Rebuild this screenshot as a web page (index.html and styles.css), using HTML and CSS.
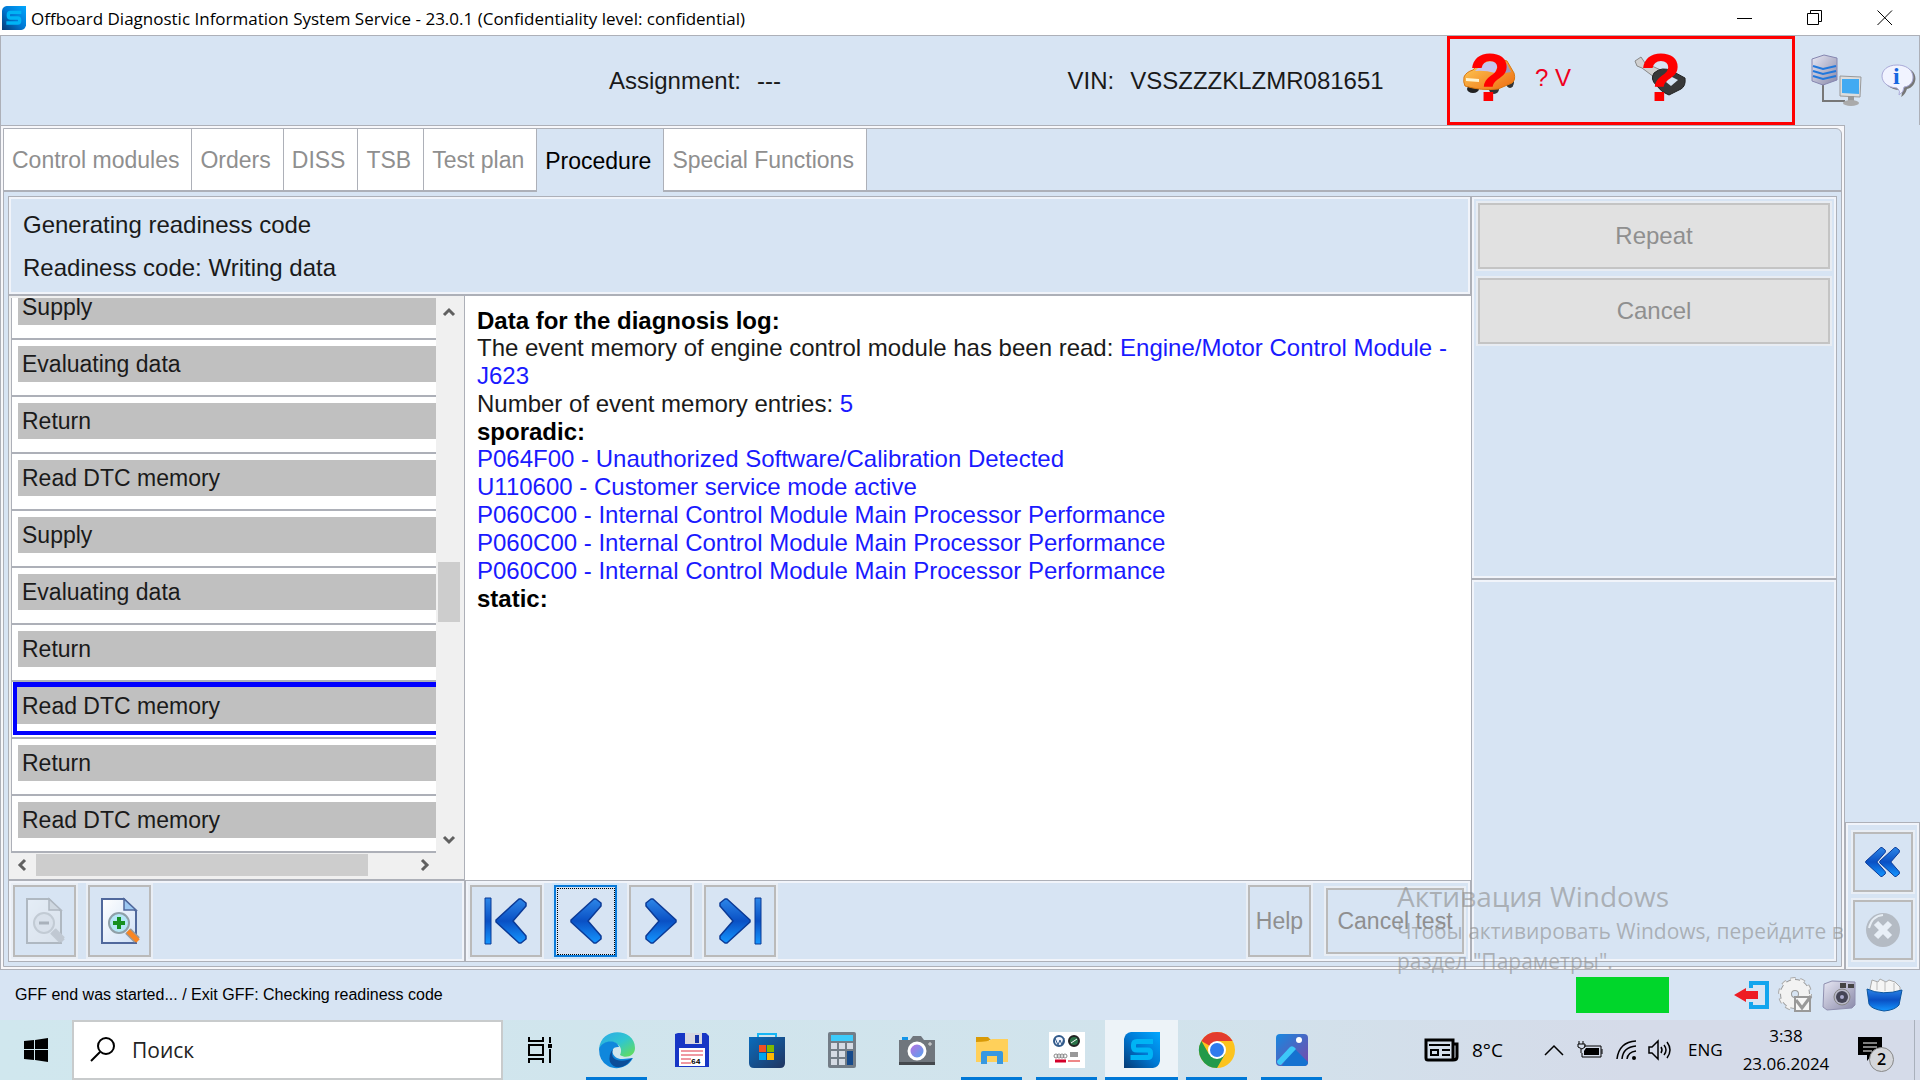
FILE: index.html
```html
<!DOCTYPE html>
<html lang="en">
<head>
<meta charset="utf-8">
<meta name="viewport" content="width=device-width, initial-scale=1">
<title>Offboard Diagnostic Information System Service</title>
<link rel="stylesheet" href="styles.css">
</head>
<body>
<svg class="defs" aria-hidden="true">
  <defs>
    <linearGradient id="blue" x1="0" y1="0" x2="0" y2="1"><stop offset="0" stop-color="#2c86e8"/><stop offset=".5" stop-color="#0a50c4"/><stop offset="1" stop-color="#1496ff"/></linearGradient>
    <linearGradient id="brand" x1="0" y1="1" x2="1" y2="0"><stop offset="0" stop-color="#063a74"/><stop offset=".5" stop-color="#0078d4"/><stop offset="1" stop-color="#00a8ff"/></linearGradient>
    <linearGradient id="orange" x1="0" y1="0" x2="1" y2="1"><stop offset="0" stop-color="#ffd45c"/><stop offset="1" stop-color="#ee6a10"/></linearGradient>
    <linearGradient id="paper" x1="0" y1="0" x2="1" y2="1"><stop offset="0" stop-color="#fff"/><stop offset="1" stop-color="#cfe0f6"/></linearGradient>
    <linearGradient id="edgeTop" x1="0" y1="0" x2="1" y2="1"><stop offset="0" stop-color="#2ba8ea"/><stop offset=".5" stop-color="#30c6cf"/><stop offset="1" stop-color="#6be04b"/></linearGradient>
    <linearGradient id="store" x1="0" y1="0" x2="1" y2="1"><stop offset="0" stop-color="#0a6cbd"/><stop offset="1" stop-color="#213560"/></linearGradient>
    <linearGradient id="lens" x1="0" y1="0" x2="1" y2="1"><stop offset="0" stop-color="#c36be0"/><stop offset="1" stop-color="#4aa8f0"/></linearGradient>
    <linearGradient id="photo" x1="0" y1="0" x2="1" y2="1"><stop offset="0" stop-color="#1788e0"/><stop offset="1" stop-color="#7b48a8"/></linearGradient>
    <linearGradient id="metal" x1="0" y1="0" x2="1" y2="1"><stop offset="0" stop-color="#e8e8f4"/><stop offset="1" stop-color="#8888a8"/></linearGradient>
    <symbol id="logo" viewBox="0 0 36 36">
      <path d="M7 0H36V29Q35 35 29 36H0V7Q1 1 7 0Z" fill="url(#brand)"/>
      <path d="M29 9.500H13Q9.500 9.500 9.500 13V15Q9.500 18 13 18H23.500Q26.500 18 26.500 21V22.500Q26.500 25.500 23.500 25.500H6.500" fill="none" stroke="#00b4f5" stroke-width="5"/>
    </symbol>
    <symbol id="chev" viewBox="0 0 32 48"><path d="M24 2H26L31 6V9L18 24L31 39V42L26 46H24L1 25V23Z" fill="url(#blue)" stroke="#0b3a96" stroke-width="1.500" stroke-linejoin="round"/></symbol>
    <symbol id="page" viewBox="0 0 40 48">
      <path d="M2 2H24L36 14V46H2Z" fill="url(#paper)" stroke="#50689c" stroke-width="2"/>
      <path d="M24 2V13H36Z" fill="#9cc8f2" stroke="#50689c" stroke-width="1.500"/>
      <path d="M28 34L37 43" stroke="#999" stroke-width="8"/>
      <path d="M28 34L38 44" stroke="#f98522" stroke-width="5"/>
      <circle cx="19" cy="26" r="10" fill="#b4e6f6" stroke="#8fa0a8" stroke-width="2"/>
    </symbol>
  </defs>
</svg>

<div class="app">
  <header class="titlebar">
    <svg class="titlebar-logo"><use href="#logo"/></svg>
    <h1 class="titlebar-text">Offboard Diagnostic Information System Service - 23.0.1 (Confidentiality level: confidential)</h1>
    <div class="window-controls">
      <button aria-label="Minimize"><svg width="16" height="16"><path d="M0 8.500H15" stroke="#000"/></svg></button>
      <button aria-label="Restore"><svg width="16" height="16" fill="none" stroke="#000"><path d="M.5 3.500H11.500V14.500H.5ZM3.500 3.500V.5H14.500V11.500H11.500"/></svg></button>
      <button aria-label="Close"><svg width="16" height="16"><path d="M.5 .5L15 15M15 .5L.5 15" stroke="#000"/></svg></button>
    </div>
  </header>

  <section class="session">
    <p class="session-field session-assignment"><span>Assignment:</span><span>---</span></p>
    <p class="session-field"><span>VIN:</span><span>VSSZZZKLZMR081651</span></p>
    <div class="signals">
      <svg width="56" height="60" viewBox="0 0 56 60" role="img" aria-label="Vehicle unknown">
        <ellipse cx="12" cy="41" rx="6" ry="4" fill="#222"/><ellipse cx="33" cy="41" rx="5" ry="5" fill="#333"/><ellipse cx="49" cy="34" rx="4" ry="6" fill="#333"/>
        <path d="M3 29Q5 24 12 22L20 13Q34 8 46 13L53 25Q55 32 51 35L37 41Q20 43 4 38Q2 34 3 29Z" fill="url(#orange)" stroke="#d9770f"/>
        <path d="M14 23L22 15Q30 12 38 14L34 25Q24 22 14 23Z" fill="#c5c5ee"/><path d="M40 15L46 16L50 24L38 26Z" fill="#9a9ac0"/>
        <path d="M5 30L18 31V34L5 33Z" fill="#fff3cf"/>
        <text x="8" y="53" class="alert-mark">?</text>
      </svg>
      <span class="volts">? V</span>
      <svg class="key-icon" width="56" height="60" viewBox="0 0 56 60" role="img" aria-label="Ignition unknown">
        <path d="M3 13L9 9L13 15L31 23L26 32L10 20L5 18Z" fill="#d0d0d0" stroke="#888"/>
        <path d="M22 25Q30 18 40 23L53 30Q54 38 49 41L37 47Q30 45 24 37Q18 31 22 25Z" fill="#383838" stroke="#222"/>
        <path d="M38 28L46 32L39 38L34 34Z" fill="#d7e4f2"/>
        <text x="8" y="53" class="alert-mark">?</text>
      </svg>
    </div>
    <div class="session-icons">
      <svg width="54" height="54" viewBox="0 0 54 54" role="img" aria-label="Network">
        <path d="M14 26V47H36" fill="none" stroke="#777" stroke-width="2"/>
        <path d="M3 5L15 1L28 4V26L14 31L3 27Z" fill="url(#metal)" stroke="#8686b0"/>
        <path d="M4 12L14 15L27 12M4 17L14 20L27 17M4 22L14 25L27 22" fill="none" stroke="#2278dc" stroke-width="2"/>
        <path d="M31 22L52 23L51 43L31 42Z" fill="#ddd" stroke="#999"/><path d="M33 25L50 25V40L33 39Z" fill="#42aaf2"/>
        <path d="M39 42H45V47H39Z" fill="#999"/><ellipse cx="42" cy="49" rx="8" ry="3" fill="#aaa"/>
      </svg>
      <svg width="36" height="36" viewBox="0 0 36 36" role="img" aria-label="Information">
        <path d="M18 4C40 4 37 24 26 26Q24 32 20 34Q22 30 19 27C-2 26-2 4 18 4Z" fill="#777"/>
        <path d="M16 2C36 2 36 23 23 24Q23 29 18 32Q20 28 16 25C-4 24-4 2 16 2Z" fill="#f1f3ff" stroke="#aaaad8"/>
        <text x="12" y="21" class="info-mark">i</text>
      </svg>
    </div>
  </section>

  <div class="workspace">
    <main class="frame"><div class="frame-inner">
      <nav class="tabs" role="tablist">
        <button role="tab" class="tab">Control modules</button>
        <button role="tab" class="tab">Orders</button>
        <button role="tab" class="tab">DISS</button>
        <button role="tab" class="tab">TSB</button>
        <button role="tab" class="tab">Test plan</button>
        <button role="tab" class="tab tab-active" aria-selected="true">Procedure</button>
        <button role="tab" class="tab">Special Functions</button>
        <span class="tabs-rest"></span>
      </nav>
      <div class="content">
        <div class="procedure">
          <section class="panel heading"><p>Generating readiness code</p><p>Readiness code: Writing data</p></section>
          <div class="split">
            <div class="steps">
              <div class="steps-view">
                <ol class="step-list">
                  <li class="step"><span>Supply</span></li>
                  <li class="step"><span>Evaluating data</span></li>
                  <li class="step"><span>Return</span></li>
                  <li class="step"><span>Read DTC memory</span></li>
                  <li class="step"><span>Supply</span></li>
                  <li class="step"><span>Evaluating data</span></li>
                  <li class="step"><span>Return</span></li>
                  <li class="step step-current"><span>Read DTC memory</span></li>
                  <li class="step"><span>Return</span></li>
                  <li class="step"><span>Read DTC memory</span></li>
                </ol>
                <div class="vscroll">
                  <svg width="12" height="10"><path d="M1 8L6 3L11 8" class="arrow"/></svg>
                  <div class="vtrack"><div class="vthumb"></div></div>
                  <svg width="12" height="10"><path d="M1 2L6 7L11 2" class="arrow"/></svg>
                </div>
              </div>
              <div class="hscroll">
                <svg width="10" height="12"><path d="M8 1L3 6L8 11" class="arrow"/></svg>
                <div class="htrack"><div class="hthumb"></div></div>
                <svg width="10" height="12"><path d="M2 1L7 6L2 11" class="arrow"/></svg>
              </div>
            </div>
            <article class="log">
              <h2>Data for the diagnosis log:</h2>
              <p>The event memory of engine control module has been read: <em>Engine/Motor Control Module - J623</em></p>
              <p>Number of event memory entries: <em>5</em></p>
              <h2>sporadic:</h2>
              <p><em>P064F00 - Unauthorized Software/Calibration Detected</em></p>
              <p><em>U110600 - Customer service mode active</em></p>
              <p><em>P060C00 - Internal Control Module Main Processor Performance</em></p>
              <p><em>P060C00 - Internal Control Module Main Processor Performance</em></p>
              <p><em>P060C00 - Internal Control Module Main Processor Performance</em></p>
              <h2>static:</h2>
            </article>
            <div class="panel toolbar">
              <button class="tool" disabled aria-label="Zoom out"><svg class="faded" width="40" height="48"><use href="#page"/><path d="M14 26H24" stroke="#555" stroke-width="3"/></svg></button>
              <button class="tool" aria-label="Zoom in"><svg width="40" height="48"><use href="#page"/><path d="M13 26H25M19 20V32" stroke="#159020" stroke-width="4"/></svg></button>
            </div>
            <div class="panel toolbar">
              <button class="tool tool-wide" aria-label="First"><svg width="44" height="48"><path d="M1 1H7V47H1Z" fill="url(#blue)" stroke="#0b3a96"/><use href="#chev" x="11" width="32" height="48"/></svg></button>
              <button class="tool tool-focus" aria-label="Previous"><svg width="32" height="48"><use href="#chev"/></svg></button>
              <button class="tool" aria-label="Next"><svg class="flip" width="32" height="48"><use href="#chev"/></svg></button>
              <button class="tool tool-wide" aria-label="Last"><svg class="flip" width="44" height="48"><path d="M1 1H7V47H1Z" fill="url(#blue)" stroke="#0b3a96"/><use href="#chev" x="11" width="32" height="48"/></svg></button>
              <button class="tool tool-help" disabled>Help</button>
              <button class="tool tool-cancel" disabled>Cancel test</button>
            </div>
          </div>
        </div>
        <aside class="actions">
          <div class="panel action-buttons">
            <button class="action" disabled>Repeat</button>
            <button class="action" disabled>Cancel</button>
          </div>
          <div class="panel"></div>
        </aside>
      </div>
    </div></main>
    <aside class="dock">
      <div class="panel dock-panel">
        <button class="dock-button" aria-label="Collapse"><svg width="36" height="34"><use href="#chev" x="0" y="1" width="21" height="32"/><use href="#chev" x="14" y="1" width="21" height="32"/></svg></button>
        <button class="dock-button" disabled aria-label="Close"><svg width="36" height="36"><circle cx="18" cy="18" r="17" fill="#b4bbc4"/><path d="M4 16Q7 4 18 3" fill="none" stroke="#e6edf4" stroke-width="2"/><path d="M11 11L25 25M25 11L11 25" stroke="#e8eff7" stroke-width="6"/></svg></button>
      </div>
    </aside>
  </div>

  <footer class="status">
    <p>GFF end was started... / Exit GFF: Checking readiness code</p>
    <div class="progress"></div>
    <div class="status-icons">
      <svg width="36" height="36"><path d="M17 11V6H33V30H17V25" fill="none" stroke="#12a5ee" stroke-width="4"/><path d="M0 18L12 11V14H24V22H12V25Z" fill="#ee1c24"/></svg>
      <svg width="36" height="36"><circle cx="17" cy="17" r="15" fill="none" stroke="#aaa" stroke-width="4" stroke-dasharray="5 4.400"/><circle cx="17" cy="17" r="9" fill="none" stroke="#999" stroke-width="12"/><circle cx="17" cy="17" r="9" fill="none" stroke="#f2f2f2" stroke-width="10"/><circle cx="17" cy="17" r="14" fill="none" stroke="#f2f2f2" stroke-width="4" stroke-dasharray="4 4.800"/><path d="M17 20H32V34H17Z" fill="#f6f6f6" stroke="#999" stroke-width="2"/><path d="M18 23L24 31L33 19" fill="none" stroke="#999" stroke-width="3"/></svg>
      <svg width="36" height="36"><path d="M2 7L10 4L33 5V28L30 31L5 33L1 30Z" fill="url(#metal)" stroke="#9090b0"/><path d="M18 6H24V11H18ZM26 7H32V11H26Z" fill="#444"/><circle cx="20" cy="20" r="8" fill="#b8b8c8" stroke="#888"/><circle cx="20" cy="20" r="6" fill="#445"/><circle cx="20" cy="20" r="2" fill="#aac"/></svg>
      <svg width="38" height="38"><path d="M4 13L6 4L12 6L14 3L20 6L23 4L29 6L34 11V18H4Z" fill="#f5f5f5" stroke="#aaa"/><path d="M11 6V14M19 6V15M28 7V15" stroke="#bbb"/><path d="M1 13Q16 20 36 14L33 29Q29 34 18 35Q5 33 3 28Z" fill="url(#blue)" stroke="#0b559e"/></svg>
    </div>
  </footer>

  <nav class="taskbar">
    <button class="start" aria-label="Start"><svg width="26" height="26"><path d="M1 4L11 3V12H1ZM12 3L25 1V12H12ZM1 13H11V23L1 22ZM12 13H25V25L12 23Z"/></svg></button>
    <label class="search"><svg width="26" height="26" fill="none" stroke="#000" stroke-width="2"><circle cx="16" cy="9" r="8"/><path d="M10 15L1 24"/></svg><input type="text" placeholder="Поиск" aria-label="Поиск"></label>
    <button class="taskview" aria-label="Task view"><svg width="26" height="26" fill="none" stroke="#000" stroke-width="2"><path d="M2 0V4H16V0M2 8H16V18H2ZM2 26V22H16V26M23 0V6M23 12V26"/><path d="M23 7V11" stroke-width="4"/></svg></button>
    <div class="apps">
      <button class="app-button running" aria-label="Edge"><svg width="36" height="36"><path d="M0 17C2-6 36-4 36 16C36 24 27 27 21 23Q25 14 14 10Q5 9 0 17Z" fill="url(#edgeTop)"/><path d="M0 17C3 8 18 7 20 15C9 14 13 28 24 27L34 26C28 37 16 38 9 34Q0 29 0 17Z" fill="#0f87dc"/><path d="M14 17C9 30 25 31 33 26C27 37 15 38 11 30Q9 23 14 17Z" fill="#0c4d99"/></svg></button>
      <button class="app-button" aria-label="Commander"><svg width="34" height="34"><path d="M0 1L3 0H31L34 3V34H0Z" fill="#1736c5"/><path d="M10 0H27V11H10Z" fill="#d8d8e0"/><path d="M20 2H24V10H20Z" fill="#1530a5"/><path d="M4 15H30V33H4Z" fill="#fff"/><path d="M6 18H28M6 22H28M6 26H28M6 30H28" stroke="#df3344"/><path d="M16 24H28V32H16Z" fill="#fff"/><text x="16" y="31" class="disk-label">64</text></svg></button>
      <button class="app-button" aria-label="Store"><svg width="36" height="36"><path d="M9 8V2H27V8" fill="none" stroke="#16b6f5" stroke-width="2"/><path d="M0 5H36V31Q36 36 31 36H5Q0 36 0 31Z" fill="url(#store)"/><path d="M10 13H17V20H10Z" fill="#f25022"/><path d="M18 13H25V20H18Z" fill="#7fba00"/><path d="M10 21H17V28H10Z" fill="#00a4ef"/><path d="M18 21H25V28H18Z" fill="#ffb900"/></svg></button>
      <button class="app-button" aria-label="Calculator"><svg width="28" height="36"><rect width="28" height="36" rx="2" fill="#737d87"/><path d="M3 3H25V9H3Z" fill="#3dcbfa"/><path d="M3 11H9V17H3ZM11 11H17V17H11ZM19 11H25V17H19ZM3 19H9V25H3ZM11 19H17V25H11ZM3 27H9V33H3ZM11 27H17V33H11Z" fill="#d5dbe4"/><path d="M19 19H25V33H19Z" fill="#164a8b"/></svg></button>
      <button class="app-button" aria-label="Camera"><svg width="36" height="30"><path d="M3 2H9V6H3Z" fill="#1495e8"/><path d="M0 5H11L14 1H22L25 5H36V30H0Z" fill="#70767d"/><path d="M0 27H36V30H0Z" fill="#44484d"/><circle cx="18" cy="16" r="8" fill="url(#lens)" stroke="#fff" stroke-width="3"/><path d="M31 7V11M29 9H33" stroke="#ddd"/></svg></button>
      <button class="app-button running" aria-label="Explorer"><svg width="34" height="28"><path d="M1 1H13L16 4H14V8H1Z" fill="#d99a06"/><path d="M1 6Q14 6 17 3H33V26H1Z" fill="#ffd05a"/><path d="M6 28V17Q6 15 8 15H26Q28 15 28 17V28H22V20H12V28Z" fill="#3898e0"/></svg></button>
      <button class="app-button running" aria-label="Brands"><svg width="36" height="36"><path d="M0 0H36V36H0Z" fill="#fff"/><circle cx="10" cy="9" r="5" fill="#f2f6ff" stroke="#315a8a" stroke-width="2"/><path d="M6 6L9 13L11 8L13 13L15 6" fill="none" stroke="#315a8a"/><circle cx="25" cy="9" r="5" fill="#2b7348" stroke="#222" stroke-width="2"/><path d="M22 11L28 7" stroke="#fff"/><g fill="none" stroke="#888"><circle cx="7" cy="24" r="2"/><circle cx="10" cy="24" r="2"/><circle cx="13" cy="24" r="2"/><circle cx="16" cy="24" r="2"/></g><path d="M21 20H29V25H21Z" fill="#999"/><path d="M6 29H17" stroke="#d4002a" stroke-width="3"/><path d="M19 29H31" stroke="#e88" stroke-width="2"/></svg></button>
      <button class="app-button running selected" aria-label="Diagnostic service"><svg width="36" height="36"><use href="#logo"/></svg></button>
      <button class="app-button running" aria-label="Chrome"><svg width="36" height="36"><circle cx="18" cy="18" r="18" fill="#fcc31e"/><path d="M2.400 9A18 18 0 0 1 33.600 9H18V18Z" fill="#e33b2e"/><path d="M2.400 9A18 18 0 0 0 18 36L25.800 22.500L18 18L10.200 22.500Z" fill="#229a4a"/><circle cx="18" cy="18" r="9" fill="#fff"/><circle cx="18" cy="18" r="7" fill="#2f7bed"/></svg></button>
      <button class="app-button running" aria-label="Photos"><svg width="32" height="32"><rect width="32" height="32" rx="4" fill="url(#photo)"/><path d="M16 15Q18 13 20 16L32 28Q32 32 28 32H6Z" fill="#1572d0"/><path d="M1 27L14 13Q17 11 20 15L5 31Q1 31 1 27Z" fill="#3dc7f8"/><circle cx="23" cy="6" r="3" fill="#fff"/></svg></button>
    </div>
    <div class="tray">
      <svg width="34" height="24" fill="none" stroke="#000" stroke-width="3"><path d="M2 2H29V22H4Q2 22 2 20ZM29 6H33V19Q33 22 29 22"/><path d="M5 7H26M18 12H26M18 17H26M7 12H14V17H7Z" stroke-width="2"/></svg>
      <span class="weather">8°C</span>
      <svg class="tray-chevron" width="20" height="12"><path d="M1 11L10 2L19 11" fill="none" stroke="#000" stroke-width="1.500"/></svg>
      <svg width="24" height="18"><path d="M6 5H23V16H4V12M24 8V13" fill="none" stroke="#000"/><path d="M8 7H21V14H6V10Z"/><path d="M1 0V3M5 0V3M0 3H7V6L4 8L0 6ZM3 8V12" fill="none" stroke="#000"/></svg>
      <svg class="wifi" width="22" height="22" fill="none" stroke="#000" stroke-width="1.500"><path d="M1 20Q3 3 20 2M6 20Q7 8 20 7M11 20Q12 13 20 12"/><circle cx="18" cy="19" r="2" fill="#000" stroke="none"/></svg>
      <svg width="24" height="20" fill="none" stroke="#000" stroke-width="1.500"><path d="M1 7H4L10 1V19L4 13H1ZM13 7Q15 10 13 13M16 5Q20 10 16 15M19 2Q25 10 19 18"/></svg>
      <span class="lang">ENG</span>
      <time class="clock">3:38<br>23.06.2024</time>
      <button class="notifications" aria-label="Notifications"><svg width="24" height="26"><path d="M0 0H24V18H14L9 24V18H0Z"/><path d="M5 6H19M5 10H19M5 14H14" stroke="#fff"/></svg><span class="badge">2</span></button>
    </div>
  </nav>

  <div class="watermark">
    <p class="watermark-title">Активация Windows</p>
    <p>Чтобы активировать Windows, перейдите в<br>раздел "Параметры".</p>
  </div>
</div>
</body>
</html>
```
FILE: styles.css
```css
:root {
  --face: #d7e4f3;
  --line: #adb0b8;
  --shine: #f1f4fa;
  --dim: #8f8f8f;
  --ui: "Open Sans", "Noto Sans", sans-serif;
}

* { box-sizing: border-box; }

body {
  margin: 0;
  background: var(--face);
  color: #1a1a1a;
  font: 24px/28px "Liberation Sans", Arial, sans-serif;
}

p, h1, h2, ol { margin: 0; padding: 0; }
svg { display: block; flex: none; overflow: visible; }
.defs { position: absolute; width: 0; height: 0; }
button { padding: 0; border: 0; background: none; color: inherit; font: inherit; }

.app {
  position: relative;
  display: flex;
  flex-direction: column;
  min-height: 100vh;
}

/* Window title */
.titlebar {
  display: flex;
  align-items: center;
  gap: 5px;
  height: 35px;
  padding-left: 2px;
  background: #fff;
}
.titlebar-logo { width: 24px; height: 24px; }
.titlebar-text { flex: 1; color: #000; font: 17px/24px var(--ui); padding-top: 2px; }
.window-controls { display: flex; }
.window-controls button { display: grid; place-items: center; width: 70px; height: 33px; }

/* Session header */
.session {
  display: grid;
  grid-template-columns: 1068fr 380fr 348px 124px;
  align-items: center;
  height: 90px;
  border: 1px solid var(--line);
  border-bottom: 0;
}
.session-field { display: flex; gap: 16px; }
.session-assignment { padding-left: 57%; }
.signals {
  display: flex;
  align-items: center;
  align-self: stretch;
  padding: 0 0 6px 11px;
  border: 3px solid #f00;
}
.volts { width: 84px; padding-left: 18px; color: #f00020; }
.key-icon { margin-left: 31px; }
.alert-mark { fill: #f00; font: bold 68px "Liberation Sans", Arial, sans-serif; }
.session-icons { display: flex; align-items: center; gap: 18px; padding-left: 14px; }
.info-mark { fill: #1667e0; font: bold 24px "Liberation Serif", serif; }

/* Framed work area */
.workspace { display: flex; flex: 1; }
.frame {
  display: flex;
  flex: 1;
  padding: 2px;
  border: 1px solid var(--line);
  background: #f7f7fa;
}
.frame-inner {
  display: flex;
  flex: 1;
  flex-direction: column;
  border: 1px solid var(--line);
  border-radius: 0 6px 0 0;
  background: var(--face);
}

.tabs { display: flex; height: 63px; font-size: 23px; }
.tab {
  padding: 0 12px 0 8px;
  border-right: 1px solid var(--line);
  border-bottom: 2px solid var(--line);
  background: #fff;
  color: var(--dim);
}
.tab-active { border-bottom: 0; background: var(--face); color: #000; }
.tabs-rest { flex: 1; border-bottom: 2px solid var(--line); }

.content { display: flex; flex: 1; padding: 4px; }
.procedure { display: flex; flex: 1; flex-direction: column; }
.panel { border: 1px solid var(--line); box-shadow: inset 0 0 0 2px var(--shine); }
.heading { height: 99px; padding: 6px 14px; line-height: 43px; }

.split {
  display: grid;
  flex: 1;
  grid-template-columns: 457px 1fr;
  grid-template-rows: 1fr 82px;
}

/* Steps list, scrolled to its last rows */
.steps {
  display: flex;
  flex-direction: column;
  padding: 2px;
  border: 1px solid var(--line);
  background: #f0f0f0;
}
.steps-view { display: flex; flex: 1; }
.step-list {
  display: flex;
  flex: 1;
  flex-direction: column;
  justify-content: flex-end;
  height: calc(100vh - 525px);
  overflow: hidden;
  border-left: 1px solid var(--line);
  background: #fff;
  font-size: 23px;
  list-style: none;
}
.step { flex: none; height: 57px; padding: 6px 0 0 6px; border-bottom: 2px solid var(--line); }
.step span { display: block; height: 36px; padding-left: 4px; background: silver; line-height: 37px; }
.step-current { padding: 0 0 2px 1px; }
.step-current span {
  height: 53px;
  padding-left: 5px;
  border: solid #00f;
  border-width: 5px 0 4px 4px;
  background: linear-gradient(silver 37px, #fff 37px);
  line-height: 38px;
}
.vscroll {
  display: flex;
  flex-direction: column;
  align-items: center;
  width: 26px;
  padding: 9px 2px 8px;
}
.vtrack { flex: 1; width: 22px; padding-top: 245px; }
.vthumb { height: 60px; background: #cdcdcd; }
.hscroll { display: flex; align-items: center; height: 24px; padding: 0 32px 0 6px; }
.htrack { flex: 1; padding: 0 52px 0 9px; }
.hthumb { height: 22px; background: #cdcdcd; }
.arrow { fill: none; stroke: #606060; stroke-width: 3; }

/* Diagnosis log */
.log { padding: 11px 12px; border-top: 1px solid var(--line); background: #fff; }
.log h2 { color: #000; font-size: 24px; line-height: 27px; }
.log em { color: #1a1aff; font-style: normal; }

/* Tool buttons */
.toolbar { display: flex; align-items: center; gap: 12px; padding: 0 6px 0 4px; }
.tool, .dock-button {
  display: grid;
  place-items: center;
  width: 63px;
  height: 72px;
  border: 2px solid #bababa;
  outline: 2px solid #e9eef5;
}
.tool-wide { width: 72px; }
.tool-focus { border-color: #0a7ad8; outline-color: #cbe4fa; }
.tool-focus::before { content: ""; grid-area: 1 / 1; width: 56px; height: 65px; border: 1px dotted #000; }
.tool-focus svg { grid-area: 1 / 1; }
.tool-help { margin: 0 3px 0 auto; color: var(--dim); font-size: 23px; }
.tool-cancel { width: 138px; height: 66px; color: var(--dim); font-size: 23px; }
.flip { transform: scaleX(-1); }
.faded { opacity: .35; filter: grayscale(1); }

/* Right column */
.actions { display: grid; grid-template-rows: 1fr 1fr; width: 366px; }
.action-buttons { display: flex; flex-direction: column; gap: 9px; padding: 6px; }
.action {
  height: 66px;
  border: 2px solid #c4c4c4;
  outline: 2px solid #e8ecf2;
  background: #e1e1e1;
  color: var(--dim);
}
.dock { display: flex; align-items: flex-end; width: 75px; }
.dock-panel {
  display: flex;
  flex: 1;
  flex-direction: column;
  align-items: center;
  gap: 8px;
  padding: 9px 0;
}
.dock-button { width: 60px; height: 60px; }

/* Status line */
.status {
  display: flex;
  align-items: center;
  height: 50px;
  padding: 0 16px 0 15px;
  color: #000;
  font-size: 16px;
}
.progress { width: 93px; height: 36px; margin: 0 65px 0 auto; background: #00d62b; }
.status-icons { display: flex; align-items: center; gap: 8px; }

/* Taskbar */
.taskbar {
  display: flex;
  height: 60px;
  background: linear-gradient(90deg, #d0e7ee, #d1e3ec 60%, #d5dbe9 85%);
  color: #000;
  font-family: var(--ui);
}
.start { display: grid; place-items: center; width: 72px; }
.search {
  display: flex;
  align-items: center;
  gap: 14px;
  width: 431px;
  padding-left: 16px;
  border: 2px solid #c8cbcc;
  background: #fff;
}
.search input { width: 300px; border: 0; outline: 0; font: 21px/28px var(--ui); }
.search input::placeholder { color: #222; opacity: 1; }
.taskview { display: grid; place-items: center; width: 73px; }
.apps { display: flex; gap: 2px; padding-left: 4px; }
.app-button { position: relative; display: grid; place-items: center; width: 73px; height: 60px; }
.running::after {
  content: "";
  position: absolute;
  right: 6px;
  bottom: 0;
  left: 6px;
  height: 3px;
  background: #0078d7;
}
.selected { background: #edf3f8; }
.selected::after { right: 0; left: 0; }
.disk-label { font: bold 8px "Liberation Mono", monospace; }

.tray {
  display: flex;
  align-items: center;
  margin: 0 5px 0 auto;
  padding-right: 16px;
  border-right: 1px solid #a9b0bb;
  font-size: 17px;
  line-height: 28px;
}
.weather { width: 86px; padding-left: 14px; font-size: 19px; }
.tray-chevron { margin-right: 14px; }
.wifi { margin: 0 10px 0 14px; }
.lang { width: 58px; padding-left: 16px; }
.clock { width: 112px; text-align: center; }
.notifications { position: relative; margin-left: 16px; padding-right: 16px; }
.badge {
  position: absolute;
  top: 10px;
  left: 11px;
  width: 25px;
  height: 25px;
  border: 1px solid #888;
  border-radius: 50%;
  background: #d4d6da;
  font-size: 16px;
  font-weight: 600;
  line-height: 22px;
}

/* Activation notice lying over the window */
.watermark {
  position: absolute;
  right: 80px;
  bottom: 104px;
  width: 443px;
  color: rgba(140, 140, 140, .6);
  font: 21px/30px var(--ui);
  white-space: nowrap;
  pointer-events: none;
}
.watermark-title { font-size: 28px; line-height: 40px; }
```
